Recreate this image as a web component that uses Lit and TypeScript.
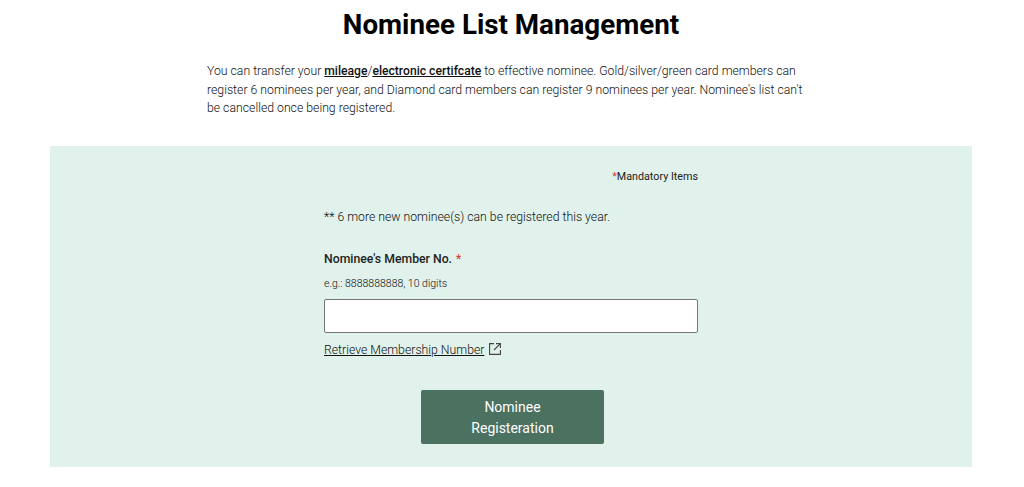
import { LitElement, html, css } from "lit";
import { customElement } from "lit/decorators.js";

@customElement("app-root")
export class AppRoot extends LitElement {
  static styles = css`
    :host { display: block; width: 1024px; height: 487px; overflow: hidden; background: #fff; font-family: Roboto, "Liberation Sans", sans-serif; color: #222; }
    .page { display: flex; flex-direction: column; align-items: center; }
    h1 { box-sizing: border-box; margin: 8px 0 0; padding-right: 2px; font-size: 27.75px; line-height: 34px; font-weight: 700; color: #000; text-align: center; width: 100%; }
    .intro { margin: 20px 0 0 207px; width: 600px; font-size: 12.25px; line-height: 18.5px; font-weight: 300; color: #111; align-self: flex-start; }
    .intro a { color: #111; font-size: 12.15px; font-weight: 500; text-decoration: underline; }
    .panel { box-sizing: border-box; align-self: flex-start; margin: 28px 0 0 50px; width: 922px; height: 321px; background: #e0f2eb; padding-top: 24px; }
    .col { width: 374px; margin-left: 274px; display: flex; flex-direction: column; }
    .mandatory { align-self: flex-end; font-size: 10.75px; line-height: 13px; font-weight: 400; color: #222; }
    .red { color: #d0392b; }
    .note { margin-top: 26px; font-size: 12.25px; line-height: 16px; font-weight: 300; color: #111; }
    .label { margin-top: 26px; font-size: 12.25px; line-height: 16px; font-weight: 500; color: #222; }
    .label .red { font-weight: 400; margin-left: 1px; }
    .hint { margin-top: 10px; font-size: 10.5px; line-height: 14px; font-weight: 300; color: #111; }
    input { box-sizing: border-box; display: block; margin-top: 8px; width: 374px; height: 34px; background: #fff; border: 1px solid #777; border-radius: 2px; padding: 0 8px; outline: none; }
    .retrieve { margin-top: 9px; display: flex; align-items: center; gap: 4px; font-size: 12.25px; line-height: 16px; font-weight: 300; color: #111; }
    .retrieve a { color: #111; text-decoration: underline; }
    .retrieve svg { display: block; width: 14px; height: 14px; margin-top: -2px; }
    button { box-sizing: border-box; align-self: flex-start; margin: 32px 0 0 97px; width: 183px; height: 54px; background: #4b7161; border: 0; border-radius: 2px; color: #fff; font-family: inherit; font-size: 14px; line-height: 21px; padding: 2px 40px 0; font-weight: 400; }
  `;

  render() {
    return html`
      <div class="page">
        <h1>Nominee List Management</h1>
        <p class="intro">You can transfer your <a href="#">mileage</a>/<a href="#">electronic certifcate</a> to effective nominee. Gold/silver/green card members can register 6 nominees per year, and Diamond card members can register 9 nominees per year. Nominee's list can't be cancelled once being registered.</p>
        <section class="panel">
          <div class="col">
            <div class="mandatory"><span class="red">*</span>Mandatory Items</div>
            <div class="note">** 6 more new nominee(s) can be registered this year.</div>
            <div class="label">Nominee's Member No. <span class="red">*</span></div>
            <div class="hint">e.g.: 8888888888, 10 digits</div>
            <input type="text" aria-label="Nominee's Member No." />
            <div class="retrieve">
              <a href="#">Retrieve Membership Number</a>
              <svg viewBox="0 0 14 14" fill="none" stroke="#444" stroke-width="1.1">
                <path d="M6 1.6H1.6V12.4H12.4V8" />
                <path d="M8 1.6H12.4V6M12.4 1.6L6 8" />
              </svg>
            </div>
            <button>Nominee Registeration</button>
          </div>
        </section>
      </div>
    `;
  }
}
